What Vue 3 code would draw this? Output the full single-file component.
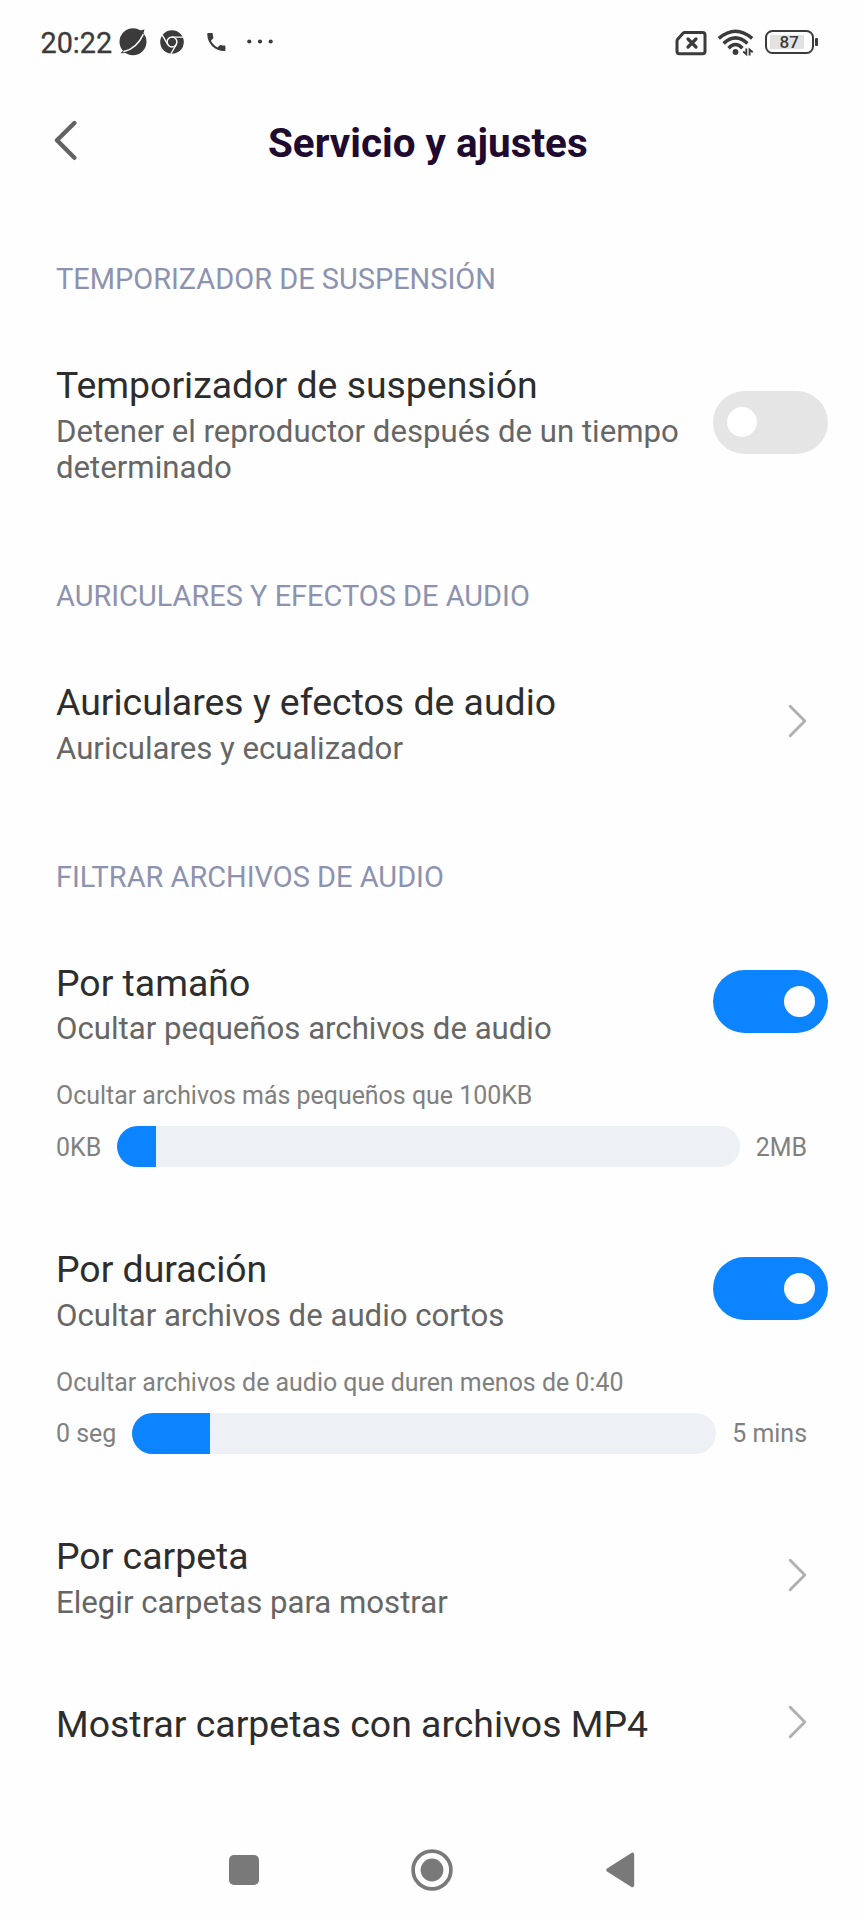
<script setup>
const sections = [
  {
    heading: 'TEMPORIZADOR DE SUSPENSIÓN',
    rows: [
      {
        title: 'Temporizador de suspensión',
        sub: 'Detener el reproductor después de un tiempo determinado',
        kind: 'toggle',
        on: false
      }
    ]
  },
  {
    heading: 'AURICULARES Y EFECTOS DE AUDIO',
    rows: [
      { title: 'Auriculares y efectos de audio', sub: 'Auriculares y ecualizador', kind: 'link' }
    ]
  },
  {
    heading: 'FILTRAR ARCHIVOS DE AUDIO',
    rows: [
      {
        title: 'Por tamaño',
        sub: 'Ocultar pequeños archivos de audio',
        kind: 'toggle',
        on: true,
        range: { caption: 'Ocultar archivos más pequeños que 100KB', min: '0KB', max: '2MB', fill: 6.2 }
      },
      {
        title: 'Por duración',
        sub: 'Ocultar archivos de audio cortos',
        kind: 'toggle',
        on: true,
        range: { caption: 'Ocultar archivos de audio que duren menos de 0:40', min: '0 seg', max: '5 mins', fill: 13.3 }
      },
      { title: 'Por carpeta', sub: 'Elegir carpetas para mostrar', kind: 'link' },
      { title: 'Mostrar carpetas con archivos MP4', kind: 'link' }
    ]
  }
]
</script>

<template>
  <div class="screen">
    <div class="status">
      <span class="clock">20:22</span>
      <svg class="notif" width="170" height="32" viewBox="116 26 170 32">
        <circle cx="133" cy="41.7" r="13.5" fill="#3b3b3b" />
        <path d="M120.5 53.3 L125 48.5 L126 53 Z M138 31 L144.5 29.6 L142.5 36 Z" fill="#3b3b3b" />
        <path d="M123.3 51.8 Q137 48.5 143.3 34.2" fill="none" stroke="#fefefe" stroke-width="1.6" />
        <circle cx="172" cy="42" r="11.8" fill="#3b3b3b" />
        <circle cx="172" cy="42" r="4.9" fill="none" stroke="#fefefe" stroke-width="1.5" />
        <path d="M172 37.1 H183.3 M167.8 44.5 L162.2 35.2 M176.3 44.5 L170.8 54" fill="none" stroke="#fefefe" stroke-width="1.4" />
        <path
          transform="translate(204.2 29.9) scale(1.01)"
          d="M6.62 10.79c1.44 2.83 3.76 5.14 6.59 6.59l2.2-2.2c.27-.27.67-.36 1.02-.24 1.12.37 2.33.57 3.57.57.55 0 1 .45 1 1V20c0 .55-.45 1-1 1-9.39 0-17-7.61-17-17 0-.55.45-1 1-1h3.5c.55 0 1 .45 1 1 0 1.25.2 2.45.57 3.57.11.35.03.74-.25 1.02l-2.2 2.2z"
          fill="#3b3b3b"
        />
        <g fill="#3b3b3b">
          <circle cx="249.3" cy="41.5" r="2.1" />
          <circle cx="260" cy="41.5" r="2.1" />
          <circle cx="270.7" cy="41.5" r="2.1" />
        </g>
      </svg>
      <svg class="signals" width="80" height="32" viewBox="674 26 80 32">
        <path d="M684.6 32.5 H702.5 Q705 32.5 705 35 V51.2 Q705 53.7 702.5 53.7 H679.5 Q677 53.7 677 51.2 V41 Q677 40 677.7 39.2 L683 33.3 Q683.7 32.5 684.6 32.5 Z" fill="none" stroke="#3b3b3b" stroke-width="3" />
        <path d="M688 39 L696 47 M696 39 L688 47" stroke="#3b3b3b" stroke-width="3.2" stroke-linecap="round" />
        <g fill="none" stroke="#3b3b3b" stroke-width="3.5">
          <path d="M718.8 38.4 Q735.5 24 752.2 38.4" />
          <path d="M723.6 43.4 Q735.5 32.2 747.4 43.4" />
          <path d="M728.6 48.2 Q735.5 41 742.4 48.2" />
        </g>
        <circle cx="735.5" cy="52" r="2.9" fill="#3b3b3b" />
        <path d="M746.3 48.4 V54.2 L743.2 51.6 M749.6 55.4 V49.6 L752.7 52.2" fill="none" stroke="#3b3b3b" stroke-width="1.9" />
      </svg>
      <div class="battery"><span class="level">87</span></div>
      <div class="nub"></div>
    </div>

    <header class="bar">
      <svg class="back" width="26" height="42" viewBox="0 0 26 42">
        <path d="M21.4 3 L4 20.3 L21.4 37.8" fill="none" stroke="#636363" stroke-width="4.4" stroke-linecap="round" stroke-linejoin="round" />
      </svg>
      <h1>Servicio y ajustes</h1>
    </header>

    <main>
      <section v-for="s in sections" :key="s.heading">
        <h2>{{ s.heading }}</h2>
        <div v-for="r in s.rows" :key="r.title" class="item">
          <div class="row" :class="r.kind">
            <div class="text">
              <div class="title">{{ r.title }}</div>
              <div v-if="r.sub" class="sub">{{ r.sub }}</div>
            </div>
            <div v-if="r.kind === 'toggle'" class="switch" :class="{ on: r.on }"><i></i></div>
            <svg v-else class="chevron" width="20" height="34" viewBox="0 0 20 34">
              <path d="M2.2 2.2 L16.8 17 L2.2 31.8" fill="none" stroke="#b0b0b0" stroke-width="2.9" stroke-linecap="round" stroke-linejoin="round" />
            </svg>
          </div>
          <div v-if="r.range" class="range">
            <div class="caption">{{ r.range.caption }}</div>
            <div class="slider">
              <span>{{ r.range.min }}</span>
              <div class="track"><div class="fill" :style="{ width: r.range.fill + '%' }"></div></div>
              <span>{{ r.range.max }}</span>
            </div>
          </div>
        </div>
      </section>
    </main>

    <nav>
      <svg width="42" height="42" viewBox="0 0 42 42"><rect x="6" y="6" width="30" height="30" rx="5" fill="#797979" /></svg>
      <svg width="42" height="42" viewBox="0 0 42 42">
        <circle cx="21" cy="21" r="18.9" fill="none" stroke="#797979" stroke-width="3.7" />
        <circle cx="21" cy="21" r="11.4" fill="#797979" />
      </svg>
      <svg width="42" height="42" viewBox="0 0 42 42"><path d="M9 21 L33.4 5.5 V36.5 Z" fill="#797979" stroke="#797979" stroke-width="3.6" stroke-linejoin="round" /></svg>
    </nav>
  </div>
</template>

<style>
body {
  background: #fefefe;
}
</style>

<style scoped>
.screen {
  width: 864px;
  height: 1920px;
  box-sizing: border-box;
  overflow: hidden;
  display: flex;
  flex-direction: column;
  background: #fefefe;
  font-family: Roboto, "Liberation Sans", sans-serif;
}
.status {
  height: 84px;
  flex: none;
  box-sizing: border-box;
  padding: 26px 46px 0 40.5px;
  display: flex;
  align-items: flex-start;
}
.clock {
  width: 75.5px;
  font-size: 28.8px;
  line-height: 35px;
  color: #3b3b3b;
  white-space: nowrap;
  -webkit-text-stroke: 0.3px #3b3b3b;
}
.notif {
  flex: none;
}
.signals {
  margin-left: auto;
  flex: none;
}
.battery {
  box-sizing: border-box;
  width: 49px;
  height: 24px;
  margin: 4px 0 0 11px;
  border: 2.5px solid #3b3b3b;
  border-radius: 7.5px;
  padding: 3px 8px 3px 3px;
  display: flex;
}
.level {
  flex: 1;
  background: #e2e2e2;
  color: #3b3b3b;
  font-size: 17px;
  font-weight: 500;
  line-height: 15px;
  padding-left: 10px;
}
.nub {
  width: 3px;
  height: 8px;
  margin: 12px 0 0 1.5px;
  border-radius: 1px;
  background: #3b3b3b;
}
.bar {
  height: 177px;
  flex: none;
  display: flex;
  align-items: flex-start;
  padding-left: 53px;
}
.back {
  margin-top: 36px;
  flex: none;
}
h1 {
  margin: 34px 0 0 189px;
  font-size: 40.4px;
  line-height: 52px;
  font-weight: 700;
  color: #200a30;
  white-space: nowrap;
}
main {
  flex: 1;
  padding-left: 56px;
}
section + section {
  margin-top: 91.4px;
}
h2 {
  margin: 0 0 64px;
  font-size: 28.95px;
  line-height: 36px;
  font-weight: 400;
  color: #8c92b0;
}
.item + .item {
  margin-top: 78.5px;
}
.row {
  display: flex;
  align-items: center;
  justify-content: space-between;
}
.row.toggle {
  padding-right: 36px;
}
.row.link {
  padding-right: 56px;
}
.title {
  font-size: 37.4px;
  line-height: 48px;
  color: #2d2d2d;
}
.sub {
  margin-top: 4.6px;
  max-width: 640px;
  font-size: 31.17px;
  line-height: 36.6px;
  color: #666;
}
.chevron {
  flex: none;
  margin-bottom: 3px;
}
.switch {
  flex: none;
  box-sizing: border-box;
  width: 115px;
  height: 63px;
  margin-bottom: 3px;
  padding: 0 14px;
  border-radius: 32px;
  background: #e5e5e5;
  display: flex;
  align-items: center;
}
.switch i {
  width: 30px;
  height: 30px;
  border-radius: 50%;
  background: #fff;
}
.switch.on {
  background: #0d84ff;
  justify-content: flex-end;
  padding: 0 13px;
}
.switch.on i {
  width: 31px;
  height: 31px;
}
.range {
  margin-top: 33px;
  padding-right: 57px;
  font-size: 24.93px;
  color: #808080;
}
.caption {
  line-height: 30px;
}
.slider {
  height: 41px;
  margin-top: 15px;
  display: flex;
  align-items: center;
  gap: 16px;
  line-height: 38px;
}
.slider span {
  padding-top: 2.5px;
}
.track {
  flex: 1;
  height: 41px;
  border-radius: 21px;
  overflow: hidden;
  background: #edf0f5;
}
.fill {
  height: 100%;
  background: #0d84ff;
}
nav {
  flex: none;
  height: 71.5px;
  padding: 0 223px;
  display: flex;
  align-items: flex-start;
  justify-content: space-between;
}
</style>
